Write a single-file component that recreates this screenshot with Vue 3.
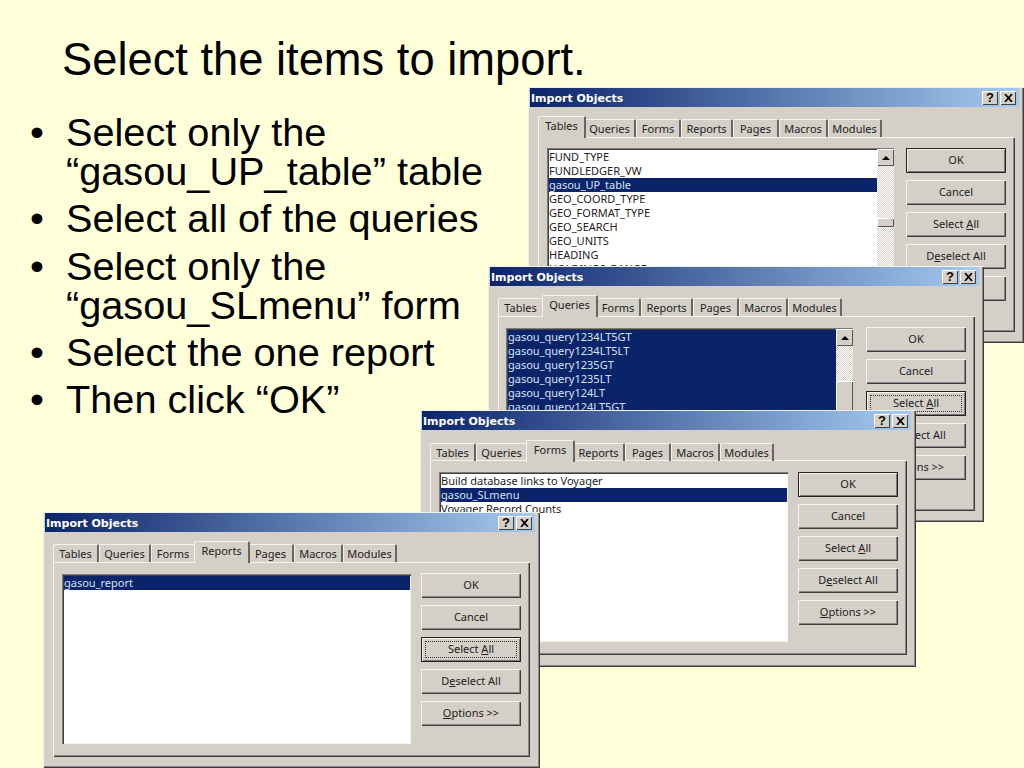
<script setup>
const tabNames = ['Tables', 'Queries', 'Forms', 'Reports', 'Pages', 'Macros', 'Modules']
const buttons = [
  { id: 'ok', pre: 'OK', key: '', post: '' },
  { id: 'cancel', pre: 'Cancel', key: '', post: '' },
  { id: 'all', pre: 'Select ', key: 'A', post: 'll' },
  { id: 'none', pre: 'D', key: 'e', post: 'select All' },
  { id: 'opts', pre: '', key: 'O', post: 'ptions >>' }
]
const bullets = [
  ['Select only the', '“gasou_UP_table” table'],
  ['Select all of the queries'],
  ['Select only the', '“gasou_SLmenu” form'],
  ['Select the one report'],
  ['Then click “OK”']
]
const dialogs = [
  {
    cls: 'd1', active: 'Tables', scroll: true, def: 'ok', focus: '',
    rows: ['FUND_TYPE', 'FUNDLEDGER_VW', 'gasou_UP_table', 'GEO_COORD_TYPE', 'GEO_FORMAT_TYPE', 'GEO_SEARCH', 'GEO_UNITS', 'HEADING', 'HOLDINGS_RANGE'],
    selected: ['gasou_UP_table']
  },
  {
    cls: 'd2', active: 'Queries', scroll: true, def: '', focus: 'all',
    rows: ['gasou_query1234LT5GT', 'gasou_query1234LT5LT', 'gasou_query1235GT', 'gasou_query1235LT', 'gasou_query124LT', 'gasou_query124LT5GT'],
    selected: ['gasou_query1234LT5GT', 'gasou_query1234LT5LT', 'gasou_query1235GT', 'gasou_query1235LT', 'gasou_query124LT', 'gasou_query124LT5GT'],
    fill: true
  },
  {
    cls: 'd3', active: 'Forms', scroll: false, def: 'ok', focus: '',
    rows: ['Build database links to Voyager', 'gasou_SLmenu', 'Voyager Record Counts'],
    selected: ['gasou_SLmenu']
  },
  {
    cls: 'd4', active: 'Reports', scroll: false, def: '', focus: 'all',
    rows: ['gasou_report'],
    selected: ['gasou_report']
  }
]
</script>

<template>
  <main class="slide">
    <h1 class="heading">Select the items to import.</h1>
    <ul class="points">
      <li v-for="(b, i) in bullets" :key="i">
        <span v-for="line in b" :key="line" class="line">{{ line }}</span>
      </li>
    </ul>

    <section v-for="d in dialogs" :key="d.cls" class="dialog" :class="d.cls">
      <header class="titlebar">
        <span class="title">Import Objects</span>
        <span class="caption-btn help">?</span>
        <span class="caption-btn close">
          <svg width="9" height="8" viewBox="0 0 9 8"><path d="M1 0 L8 8 M8 0 L1 8" stroke="#000" stroke-width="1.7" fill="none" /></svg>
        </span>
      </header>
      <nav class="tabs">
        <span
          v-for="t in tabNames"
          :key="t"
          class="tab"
          :class="['tab-' + t.toLowerCase(), { active: t === d.active }]"
        >{{ t }}</span>
      </nav>
      <div class="panel">
        <div class="list" :class="{ filled: d.fill, scrolled: d.scroll }">
          <div class="rows">
            <div
              v-for="r in d.rows"
              :key="r"
              class="row"
              :class="{ sel: d.selected.includes(r) }"
            >{{ r }}</div>
          </div>
          <div v-if="d.scroll" class="scrollbar">
            <div class="arrow"><i></i></div>
            <div class="thumb"></div>
          </div>
        </div>
        <div class="buttons">
          <div
            v-for="b in buttons"
            :key="b.id"
            class="btn"
            :class="{ def: b.id === d.def, focus: b.id === d.focus }"
          >
            <span>{{ b.pre }}<u v-if="b.key">{{ b.key }}</u>{{ b.post }}</span>
          </div>
        </div>
      </div>
    </section>
  </main>
</template>

<style>
html, body { margin: 0; background: #ffffd9; }
</style>

<style scoped>
.slide {
  position: relative;
  width: 1024px;
  height: 768px;
  overflow: hidden;
  background: #ffffd9;
  color: #000;
  font-family: "Liberation Sans", Arial, sans-serif;
}
.heading {
  margin: 0;
  padding: 35px 0 0 62px;
  font-size: 45.3px;
  font-weight: 400;
  line-height: 50px;
}
.points {
  list-style: none;
  margin: 0;
  padding: 28px 0 0 66px;
  font-size: 39.7px;
  line-height: 39px;
}
.points li { position: relative; margin-bottom: 8.3px; }
.points li::before {
  content: "•";
  position: absolute;
  left: -36px;
}
.line { display: block; }

.dialog {
  position: absolute;
  width: 496px;
  height: 256px;
  box-sizing: border-box;
  padding: 1px 2px 0;
  background: #d4d0c8;
  font-family: "Noto Sans", sans-serif;
  font-size: 11px;
  color: #222;
  box-shadow: inset 1px 1px 0 #f2f0ea, inset -1px -1px 0 #3c3c3c, inset -2px -2px 0 #888;
}
.d1 { left: 528px; top: 87px; z-index: 1; }
.d2 { left: 488px; top: 266px; z-index: 2; }
.d3 { left: 420px; top: 410px; height: 257px; z-index: 3; }
.d4 { left: 43px; top: 512px; width: 497px; z-index: 4; }

.titlebar {
  display: flex;
  align-items: center;
  height: 19px;
  width: 489px;
  padding-left: 1px;
  box-sizing: border-box;
  background: linear-gradient(90deg, #0a246a, #a6caf0);
}
.d4 .titlebar { width: 490px; }
.title {
  flex: 1;
  padding-top: 2px;
  color: #fff;
  font-family: "DejaVu Sans", sans-serif;
  font-size: 11px;
  font-weight: 700;
}
.caption-btn {
  display: flex;
  align-items: center;
  justify-content: center;
  width: 16px;
  height: 14px;
  box-sizing: border-box;
  background: #d4d0c8;
  box-shadow: inset 1px 1px 0 #fff, inset -1px -1px 0 #404040;
  font-family: "Liberation Sans", sans-serif;
  font-weight: 700;
  font-size: 13px;
  line-height: 14px;
  color: #000;
}
.help { margin-right: 2px; }
.close { margin-right: 3px; }

.tabs {
  display: flex;
  align-items: flex-end;
  height: 21px;
  margin: 9px 0 0 8px;
  position: relative;
  z-index: 1;
}
.d3 .tabs { margin-top: 10px; margin-bottom: -1px; }
.tab {
  display: flex;
  align-items: center;
  justify-content: center;
  height: 18px;
  box-sizing: border-box;
  border-top: 1px solid #f4f2ec;
  border-left: 1px solid #f4f2ec;
  border-right: 2px solid #666;
  border-radius: 2px 2px 0 0;
  padding-bottom: 1px;
}
.tab-tables { width: 46px; }
.tab-queries { width: 52px; }
.tab-forms { width: 45px; }
.tab-reports { width: 52px; }
.tab-pages { width: 46px; }
.tab-macros { width: 49px; }
.tab-modules { width: 54px; }
.tab.active {
  height: 22px;
  margin: 0 -2px -1px;
  position: relative;
  z-index: 1;
  background: #d4d0c8;
  padding: 0 0 4px;
}
.tab.active:first-child { margin-left: 0; margin-right: -2px; }
.tab-tables.active { width: 48px; }
.tab-queries.active { width: 56px; }
.tab-forms.active { width: 49px; }
.tab-reports.active { width: 56px; }

.panel {
  display: flex;
  gap: 10px;
  width: 477px;
  height: 195px;
  margin-left: 8px;
  padding: 11px 9px 0;
  box-sizing: border-box;
  box-shadow: inset 1px 1px 0 #f4f2ec, inset -1px -1px 0 #3c3c3c, inset -2px -2px 0 #888;
}
.d1 .panel { padding-top: 10px; }
.d2 .panel { padding-left: 8px; }
.d2 .buttons { margin-left: 1px; }
.d1 .buttons, .d3 .buttons { margin-top: 1px; }
.list {
  display: flex;
  flex: none;
  width: 349px;
  height: 170px;
  margin-top: 1px;
  box-sizing: border-box;
  padding: 2px 1px 1px 2px;
  background: #fff;
  overflow: hidden;
  box-shadow: inset 1px 1px 0 #7a7a7a, inset 2px 2px 0 #404040, inset -1px -1px 0 #f4f2ec;
}
.list.scrolled { width: 347px; margin-right: 2px; padding-right: 0; }
.rows { flex: 1; min-width: 0; }
.filled .rows { background: #0a246a; }
.row {
  height: 14px;
  line-height: 14px;
  white-space: nowrap;
}
.row.sel {
  background: #0a246a;
  color: #d8e2f6;
}
.scrollbar {
  flex: none;
  width: 17px;
  margin: -1px 0 0;
  background-color: #fff;
  background-image: conic-gradient(#d4d0c8 25%, #fff 0 50%, #d4d0c8 0 75%, #fff 0);
  background-size: 2px 2px;
}
.arrow {
  display: flex;
  align-items: center;
  justify-content: center;
  height: 17px;
  background: #d4d0c8;
  box-shadow: inset 1px 1px 0 #fff, inset -1px -1px 0 #555;
}
.arrow i {
  width: 0;
  height: 0;
  border-left: 4px solid transparent;
  border-right: 4px solid transparent;
  border-bottom: 4px solid #000;
}
.thumb {
  background: #d4d0c8;
  box-shadow: inset 1px 1px 0 #fff, inset -1px -1px 0 #555;
}
.d1 .thumb { margin-top: 52px; height: 9px; }
.d2 .thumb { margin-top: 35px; height: 100px; }

.buttons {
  display: flex;
  flex-direction: column;
  gap: 7px;
}
.btn {
  position: relative;
  display: flex;
  align-items: center;
  justify-content: center;
  width: 100px;
  height: 25px;
  padding-bottom: 2px;
  box-sizing: border-box;
  background: #d4d0c8;
  box-shadow: inset 1px 1px 0 #f4f2ec, inset -1px -1px 0 #3c3c3c, inset -2px -2px 0 #888;
}
.btn.def, .btn.focus {
  box-shadow: inset 0 0 0 1px #222, inset 2px 2px 0 #f4f2ec, inset -2px -2px 0 #777;
}
.btn.focus::after {
  content: "";
  position: absolute;
  inset: 4px;
  border: 1px dotted #333;
}
</style>
